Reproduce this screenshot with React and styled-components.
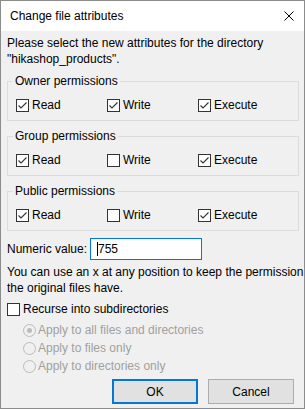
import React from 'react';
import styled, { createGlobalStyle } from 'styled-components';

const FONT = `"Liberation Sans", Arial, sans-serif`;

const Global = createGlobalStyle`
  html, body { margin: 0; padding: 0; background: #ffffff; }
  body { font-family: ${FONT}; }
`;

const Window = styled.div`
  width: 305px;
  height: 409px;
  box-sizing: border-box;
  border: 1px solid #8c8c8c;
  background: #f0f0f0;
  display: flex;
  flex-direction: column;
  font-family: ${FONT};
  font-size: 12px;
  color: #000;
  overflow: hidden;
`;

const TitleBar = styled.div`
  height: 30px;
  flex: none;
  background: #ffffff;
  display: flex;
  align-items: center;
  justify-content: space-between;
  padding: 0 10px 0 9px;
`;

const Title = styled.span`
  font-size: 12px;
  line-height: 16px;
`;

const Body = styled.div`
  display: flex;
  flex-direction: column;
  padding: 4px 5px 5px 6px;
`;

const Para = styled.p`
  margin: ${p => p.$mt || 0}px 0 0;
  line-height: 16px;
  white-space: nowrap;
`;

const Group = styled.fieldset`
  margin: 6px 0 0;
  min-width: 0;
  border: 1px solid #dcdcdc;
  padding: 8px 8px 7px;
  & + & { margin-top: 7px; }
`;

const Legend = styled.legend`
  padding: 0 2px;
  margin-left: -3px;
  line-height: 16px;
`;

const Row = styled.div`
  display: grid;
  grid-template-columns: 91px 91px auto;
  height: 16px;
  align-items: center;
`;

const Check = styled.label`
  display: flex;
  align-items: center;
  gap: 3px;
  height: 16px;
  line-height: 16px;
  margin-top: ${p => p.$mt || 0}px;
`;

const Box = styled.span`
  width: 13px;
  height: 13px;
  box-sizing: border-box;
  border: 1px solid #333333;
  background: #ffffff;
  display: flex;
  align-items: center;
  justify-content: center;
  flex: none;
`;

const Mark = () => (
  <svg width="11" height="11" viewBox="0 0 11 11">
    <path d="M1.5 5.5 L4 8 L9.5 2.5" fill="none" stroke="#333" strokeWidth="1.1" />
  </svg>
);

const CheckBox = ({ checked, label, mt }) => (
  <Check $mt={mt}>
    <Box>{checked && <Mark />}</Box>
    <span>{label}</span>
  </Check>
);

const NumRow = styled.div`
  display: flex;
  align-items: center;
  margin-top: 7px;
`;

const NumLabel = styled.span`
  width: 83px;
  flex: none;
  white-space: nowrap;
`;

const Field = styled.div`
  width: 112px;
  height: 22px;
  box-sizing: border-box;
  border: 1px solid #0078d7;
  background: #fff;
  display: flex;
  align-items: center;
  padding-left: 6px;
`;

const Caret = styled.span`
  width: 1px;
  height: 14px;
  background: #000;
`;

const Radios = styled.div`
  display: flex;
  flex-direction: column;
  margin-top: 4px;
  padding-left: 16px;
`;

const RadioRow = styled.label`
  display: flex;
  align-items: center;
  gap: 2px;
  height: 18px;
  color: #a0a0a0;
`;

const Circle = styled.span`
  width: 13px;
  height: 13px;
  box-sizing: border-box;
  border-radius: 50%;
  border: 1px solid #bcbcbc;
  background: #f0f0f0;
  display: flex;
  align-items: center;
  justify-content: center;
  flex: none;
  &::after {
    content: "";
    display: ${p => (p.$on ? 'block' : 'none')};
    width: 5px;
    height: 5px;
    border-radius: 50%;
    background: #bcbcbc;
  }
`;

const Buttons = styled.div`
  display: flex;
  justify-content: flex-end;
  gap: 10px;
  margin-top: 4px;
  padding-right: 5px;
`;

const Button = styled.button`
  width: 86px;
  height: 25px;
  box-sizing: border-box;
  background: #e1e1e1;
  border: ${p => (p.$primary ? '2px solid #0078d7' : '1px solid #adadad')};
  font-family: ${FONT};
  font-size: 12px;
  color: #000;
  padding: 0;
`;

const Group3 = ({ title, r, w, x }) => (
  <Group>
    <Legend>{title}</Legend>
    <Row>
      <CheckBox checked={r} label="Read" />
      <CheckBox checked={w} label="Write" />
      <CheckBox checked={x} label="Execute" />
    </Row>
  </Group>
);

export default function App() {
  return (
    <>
      <Global />
      <Window>
        <TitleBar>
          <Title>Change file attributes</Title>
          <svg width="10" height="10" viewBox="0 0 10 10">
            <path d="M0.5 0.5 L9.5 9.5 M9.5 0.5 L0.5 9.5" stroke="#000" strokeWidth="1" />
          </svg>
        </TitleBar>
        <Body>
          <Para>
            Please select the new attributes for the directory
            <br />"hikashop_products".
          </Para>
          <Group3 title="Owner permissions" r w x />
          <Group3 title="Group permissions" r x />
          <Group3 title="Public permissions" r x />
          <NumRow>
            <NumLabel>Numeric value:</NumLabel>
            <Field>
              <Caret />
              <span>755</span>
            </Field>
          </NumRow>
          <Para $mt={4}>
            You can use an x at any position to keep the permission
            <br />the original files have.
          </Para>
          <CheckBox label="Recurse into subdirectories" mt={5} />
          <Radios>
            <RadioRow><Circle $on /><span>Apply to all files and directories</span></RadioRow>
            <RadioRow><Circle /><span>Apply to files only</span></RadioRow>
            <RadioRow><Circle /><span>Apply to directories only</span></RadioRow>
          </Radios>
          <Buttons>
            <Button $primary>OK</Button>
            <Button>Cancel</Button>
          </Buttons>
        </Body>
      </Window>
    </>
  );
}
